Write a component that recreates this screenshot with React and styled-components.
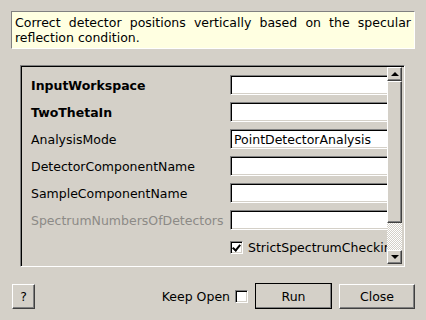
import React from 'react'
import styled, { createGlobalStyle } from 'styled-components'

const GlobalStyle = createGlobalStyle`
  html, body {
    margin: 0;
    padding: 0;
    background: #d4d0c8;
  }
  body {
    font-family: "DejaVu Sans", sans-serif;
    font-size: 12.5px;
    color: #000;
  }
`

const fields = [
  { name: 'InputWorkspace', bold: true },
  { name: 'TwoThetaIn', bold: true },
  { name: 'AnalysisMode', value: 'PointDetectorAnalysis' },
  { name: 'DetectorComponentName' },
  { name: 'SampleComponentName' },
  { name: 'SpectrumNumbersOfDetectors', disabled: true },
]

export default function App() {
  return (
    <>
      <GlobalStyle />
      <Dialog>
        <Description>
          <Justified>
            Correct detector positions vertically based on the specular
            reflection condition.
          </Justified>
        </Description>

        <Frame>
          <Viewport>
            {fields.map((f) => (
              <Row key={f.name}>
                <Label bold={f.bold} disabled={f.disabled}>
                  {f.name}
                </Label>
                <Input>{f.value}</Input>
              </Row>
            ))}
            <Row>
              <Label />
              <CheckCell>
                <Check checked />
                <CheckText>StrictSpectrumChecking</CheckText>
              </CheckCell>
            </Row>
          </Viewport>
          <ScrollBar>
            <Arrow>
              <Tri up />
            </Arrow>
            <Thumb />
            <Track />
            <Arrow>
              <Tri />
            </Arrow>
          </ScrollBar>
        </Frame>

        <Footer>
          <HelpButton>?</HelpButton>
          <Spacer />
          <KeepOpen>
            Keep Open
            <Check />
          </KeepOpen>
          <Button primary>Run</Button>
          <Button>Close</Button>
        </Footer>
      </Dialog>
    </>
  )
}

// --- STYLES
const Dialog = styled.div`
  width: 426px;
  height: 320px;
  box-sizing: border-box;
  padding: 11px 11px 0 11px;
  display: flex;
  flex-direction: column;
`

const Description = styled.div`
  height: 38px;
  box-sizing: border-box;
  background: #ffffe1;
  border-top: 1px solid #808080;
  border-left: 1px solid #808080;
  border-bottom: 1px solid #fff;
  border-right: 1px solid #fff;
  padding: 3px 3px 0 3px;
  line-height: 15px;
`

const Justified = styled.div`
  text-align: justify;
`

const Frame = styled.div`
  margin: 16px 10px 0 9px;
  height: 202px;
  box-sizing: border-box;
  border-top: 1px solid #808080;
  border-left: 1px solid #808080;
  border-bottom: 1px solid #fff;
  border-right: 1px solid #fff;
  box-shadow: inset 1px 1px 0 #000, inset -1px -1px 0 #d4d0c8;
  padding: 1px 2px 2px 1px;
  display: flex;
`

const Viewport = styled.div`
  flex: 1;
  overflow: hidden;
  padding: 8px 0 0 9px;
  display: flex;
  flex-direction: column;
  gap: 7px;
`

const Row = styled.div`
  display: flex;
  align-items: center;
  height: 20px;
  flex-shrink: 0;
`

const Label = styled.div`
  width: 199px;
  flex-shrink: 0;
  white-space: nowrap;
  font-weight: ${(p) => (p.bold ? 700 : 400)};
  color: ${(p) => (p.disabled ? '#8c8a86' : '#000')};
`

const Input = styled.div`
  width: 170px;
  height: 20px;
  flex-shrink: 0;
  box-sizing: border-box;
  background: #fff;
  border-top: 1px solid #808080;
  border-left: 1px solid #808080;
  border-bottom: 1px solid #fff;
  border-right: 1px solid #fff;
  box-shadow: inset 1px 1px 0 #000, inset -1px -1px 0 #d4d0c8;
  padding: 1px 3px;
  line-height: 17px;
  white-space: nowrap;
`

const CheckCell = styled.div`
  display: flex;
  align-items: center;
  gap: 5px;
  white-space: nowrap;
`

const CheckText = styled.span``

const Check = styled.span`
  display: inline-block;
  width: 13px;
  height: 13px;
  box-sizing: border-box;
  background: #fff;
  border-top: 1px solid #808080;
  border-left: 1px solid #808080;
  border-bottom: 1px solid #fff;
  border-right: 1px solid #fff;
  box-shadow: inset 1px 1px 0 #000, inset -1px -1px 0 #d4d0c8;
  position: relative;
  flex-shrink: 0;

  &::after {
    content: '';
    display: ${(p) => (p.checked ? 'block' : 'none')};
    position: absolute;
    left: 3px;
    top: 1px;
    width: 3px;
    height: 6px;
    border-right: 2px solid #000;
    border-bottom: 2px solid #000;
    transform: rotate(40deg);
  }
`

const ScrollBar = styled.div`
  width: 15px;
  flex-shrink: 0;
  display: flex;
  flex-direction: column;
  background-color: #fff;
  background-image: conic-gradient(#d4d0c8 25%, #fff 0 50%, #d4d0c8 0 75%, #fff 0);
  background-size: 2px 2px;
`

const Raised = styled.div`
  box-sizing: border-box;
  background: #d4d0c8;
  border-top: 1px solid #fff;
  border-left: 1px solid #fff;
  border-bottom: 1px solid #404040;
  border-right: 1px solid #404040;
  box-shadow: inset -1px -1px 0 #808080;
`

const Arrow = styled(Raised)`
  height: 14px;
  flex-shrink: 0;
  display: flex;
  align-items: center;
  justify-content: center;
`

const Tri = styled.span`
  width: 0;
  height: 0;
  border-left: 4px solid transparent;
  border-right: 4px solid transparent;
  ${(p) =>
    p.up ? 'border-bottom: 4px solid #000;' : 'border-top: 4px solid #000;'}
`

const Thumb = styled(Raised)`
  height: 142px;
  flex-shrink: 0;
`

const Track = styled.div`
  flex: 1;
`

const Footer = styled.div`
  margin-top: 16px;
  display: flex;
  align-items: center;
  padding-left: 1px;
`

const Spacer = styled.div`
  flex: 1;
`

const HelpButton = styled(Raised).attrs({ as: 'button' })`
  width: 23px;
  height: 25px;
  padding: 0;
  font-family: "DejaVu Sans", sans-serif;
  font-size: 12.5px;
  color: #000;
`

const KeepOpen = styled.div`
  display: flex;
  align-items: center;
  gap: 5px;
  margin-right: 7px;
`

const Button = styled(Raised).attrs({ as: 'button' })`
  width: ${(p) => (p.primary ? '77px' : '76px')};
  height: ${(p) => (p.primary ? '26px' : '25px')};
  padding: 0;
  margin-right: ${(p) => (p.primary ? '7px' : '0')};
  font-family: "DejaVu Sans", sans-serif;
  font-size: 12.5px;
  color: #000;
  ${(p) => (p.primary ? 'outline: 1px solid #000; outline-offset: -1px;' : '')}
`
